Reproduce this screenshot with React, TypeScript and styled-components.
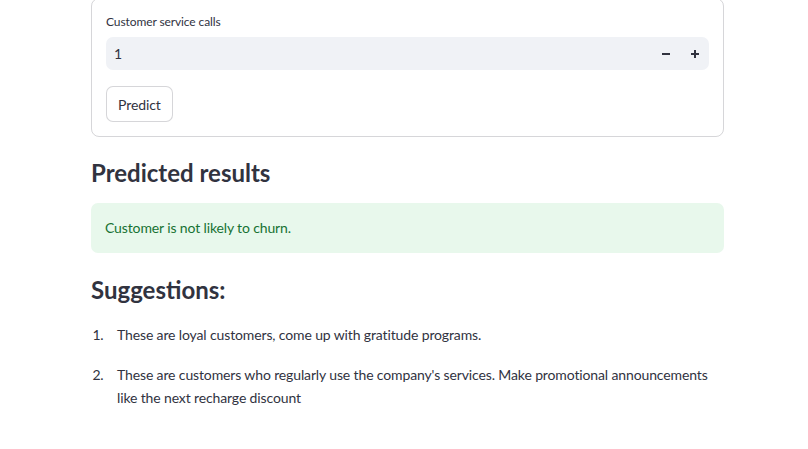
import React from "react";
import styled, { createGlobalStyle } from "styled-components";

const Global = createGlobalStyle`
  html, body { margin: 0; padding: 0; background: #ffffff; overflow: hidden; }
  body { font-family: "Lato", "Noto Sans", sans-serif; color: #31333f; }
  * { box-sizing: border-box; }
`;

const Page = styled.main`
  width: 633px;
  margin: -2px 0 0 91px;
  display: flex;
  flex-direction: column;
`;

const Form = styled.form`
  border: 1px solid rgba(49, 51, 63, 0.2);
  border-radius: 8px;
  padding: 14px 14px 14px 14px;
  display: flex;
  flex-direction: column;
`;

const Label = styled.label`
  font-size: 12px;
  line-height: 18px;
  margin-bottom: 6px;
  letter-spacing: -0.1px;
`;

const NumberBox = styled.div`
  height: 33px;
  background: #f0f2f6;
  border-radius: 7px;
  display: flex;
  align-items: center;
  padding: 0 0 0 8px;
`;

const NumberInput = styled.input`
  flex: 1;
  border: none;
  background: transparent;
  font-family: inherit;
  font-size: 14px;
  color: #31333f;
  outline: none;
  padding: 0;
`;

const StepButton = styled.button`
  width: 29px;
  height: 33px;
  border: none;
  background: transparent;
  display: flex;
  align-items: center;
  justify-content: center;
  padding: 0;
  color: #31333f;
`;

const PredictButton = styled.button`
  align-self: flex-start;
  margin-top: 16px;
  height: 36px;
  padding: 0 11px;
  border: 1px solid rgba(49, 51, 63, 0.2);
  border-radius: 7px;
  background: #ffffff;
  font-family: inherit;
  font-size: 14px;
  letter-spacing: -0.1px;
  color: #31333f;
`;

const Heading = styled.h3<{ $top: number; $bottom: number }>`
  font-size: 24px;
  font-weight: 700;
  line-height: 29px;
  margin: ${(p) => p.$top}px 0 ${(p) => p.$bottom}px 0;
  color: #31333f;
`;

const Alert = styled.div`
  background: #e8f8ec;
  color: #177233;
  border-radius: 7px;
  height: 50px;
  padding: 0 14px 2px 14px;
  display: flex;
  align-items: center;
  font-size: 14px;
  letter-spacing: -0.13px;
`;

const List = styled.ol`
  margin: 19px 0 0 0;
  padding: 0 0 0 16px;
  font-size: 14px;
  line-height: 23px;
  letter-spacing: -0.13px;
`;

const Item = styled.li`
  padding-left: 10px;
  & + & { margin-top: 17px; }
`;

const Minus = () => (
  <svg width="10" height="10" viewBox="0 0 10 10">
    <rect x="1" y="4" width="8" height="2" fill="currentColor" />
  </svg>
);

const Plus = () => (
  <svg width="10" height="10" viewBox="0 0 10 10">
    <rect x="1" y="4" width="8" height="2" fill="currentColor" />
    <rect x="4" y="1" width="2" height="8" fill="currentColor" />
  </svg>
);

export default function App() {
  return (
    <>
      <Global />
      <Page>
        <Form onSubmit={(e) => e.preventDefault()}>
          <Label>Customer service calls</Label>
          <NumberBox>
            <NumberInput defaultValue="1" />
            <StepButton type="button"><Minus /></StepButton>
            <StepButton type="button"><Plus /></StepButton>
          </NumberBox>
          <PredictButton type="submit">Predict</PredictButton>
        </Form>
        <Heading $top={21} $bottom={16}>Predicted results</Heading>
        <Alert>Customer is not likely to churn.</Alert>
        <Heading $top={22} $bottom={0}>Suggestions:</Heading>
        <List>
          <Item>These are loyal customers, come up with gratitude programs.</Item>
          <Item>
            These are customers who regularly use the company's services. Make promotional announcements like the next recharge discount
          </Item>
        </List>
      </Page>
    </>
  );
}
